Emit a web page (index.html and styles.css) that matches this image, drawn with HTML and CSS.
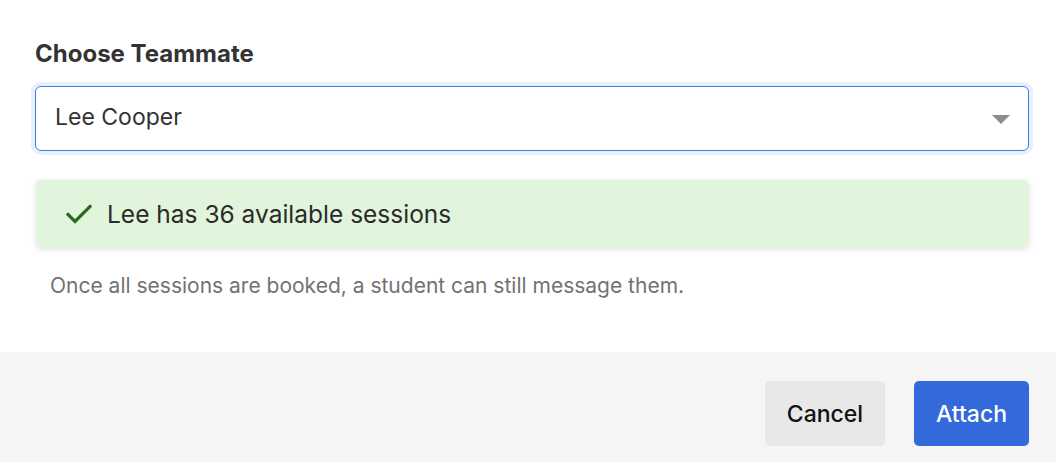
FILE: index.html
```html
<!DOCTYPE html>
<html lang="en">
<head>
<meta charset="utf-8">
<title>Choose Teammate</title>
<link rel="stylesheet" href="styles.css">
</head>
<body>
<div class="dialog">
  <div class="content">
    <label class="title" for="teammate">Choose Teammate</label>
    <div class="select">
      <span class="select-value">Lee Cooper</span>
      <span class="caret"></span>
    </div>
    <div class="banner">
      <svg class="check" width="26" height="20" viewBox="0 0 26 20" aria-hidden="true">
        <path d="M2 10.5 L9 17.5 L24 2.5" fill="none" stroke="#2c6b1f" stroke-width="3.2" stroke-linecap="square" stroke-linejoin="miter"/>
      </svg>
      <span class="banner-text">Lee has 36 available sessions</span>
    </div>
    <p class="hint">Once all sessions are booked, a student can still message them.</p>
  </div>
  <div class="footer">
    <button class="btn btn-cancel">Cancel</button>
    <button class="btn btn-attach">Attach</button>
  </div>
</div>
</body>
</html>
```

FILE: styles.css
```css
* { box-sizing: border-box; }
html, body { margin: 0; padding: 0; background: #ffffff; }
body {
  font-family: Inter, "Liberation Sans", sans-serif;
  color: #2b2b2b;
  width: 1056px;
  height: 462px;
  overflow: hidden;
}
.dialog {
  display: flex;
  flex-direction: column;
  height: 462px;
}
.content {
  padding: 40px 27px 0 35px;
  height: 352px;
  display: flex;
  flex-direction: column;
}
.title {
  display: block;
  font-size: 24px;
  line-height: 28px;
  font-weight: 700;
  color: #333333;
}
.select {
  margin-top: 18px;
  height: 65px;
  border: 1px solid #3b7cf0;
  border-radius: 6px;
  box-shadow: 0 0 0 4px #e8f0fd;
  display: flex;
  align-items: center;
  justify-content: space-between;
  padding: 0 18px 3px 19px;
  background: #fff;
}
.select-value {
  font-size: 23px;
  color: #333333;
}
.caret {
  width: 0;
  height: 0;
  border-left: 9px solid transparent;
  border-right: 9px solid transparent;
  border-top: 9px solid #8c8c8c;
  margin-top: 4px;
}
.banner {
  margin-top: 29px;
  height: 67px;
  background: #e1f5dc;
  border-radius: 5px;
  box-shadow: 0 2px 6px rgba(0, 0, 0, 0.12);
  display: flex;
  align-items: center;
  padding-left: 30px;
  margin-left: 1px;
}
.check { flex: none; }
.banner-text {
  margin-left: 15px;
  font-size: 24.5px;
  color: #2b2b2b;
}
.hint {
  margin: 26px 0 0 15px;
  font-size: 21px;
  line-height: 26px;
  color: #727272;
}
.footer {
  flex: 1;
  background: #f5f5f5;
  display: flex;
  justify-content: flex-end;
  align-items: flex-start;
  gap: 29px;
  padding: 29px 27px 0 0;
}
.btn {
  height: 65px;
  border: none;
  border-radius: 5px;
  font-family: Inter, "Liberation Sans", sans-serif;
  font-size: 23px;
  font-weight: 500;
  cursor: pointer;
}
.btn-cancel {
  width: 120px;
  background: #e8e8e8;
  color: #111111;
}
.btn-attach {
  width: 115px;
  background: #3369db;
  color: #ffffff;
}
```
